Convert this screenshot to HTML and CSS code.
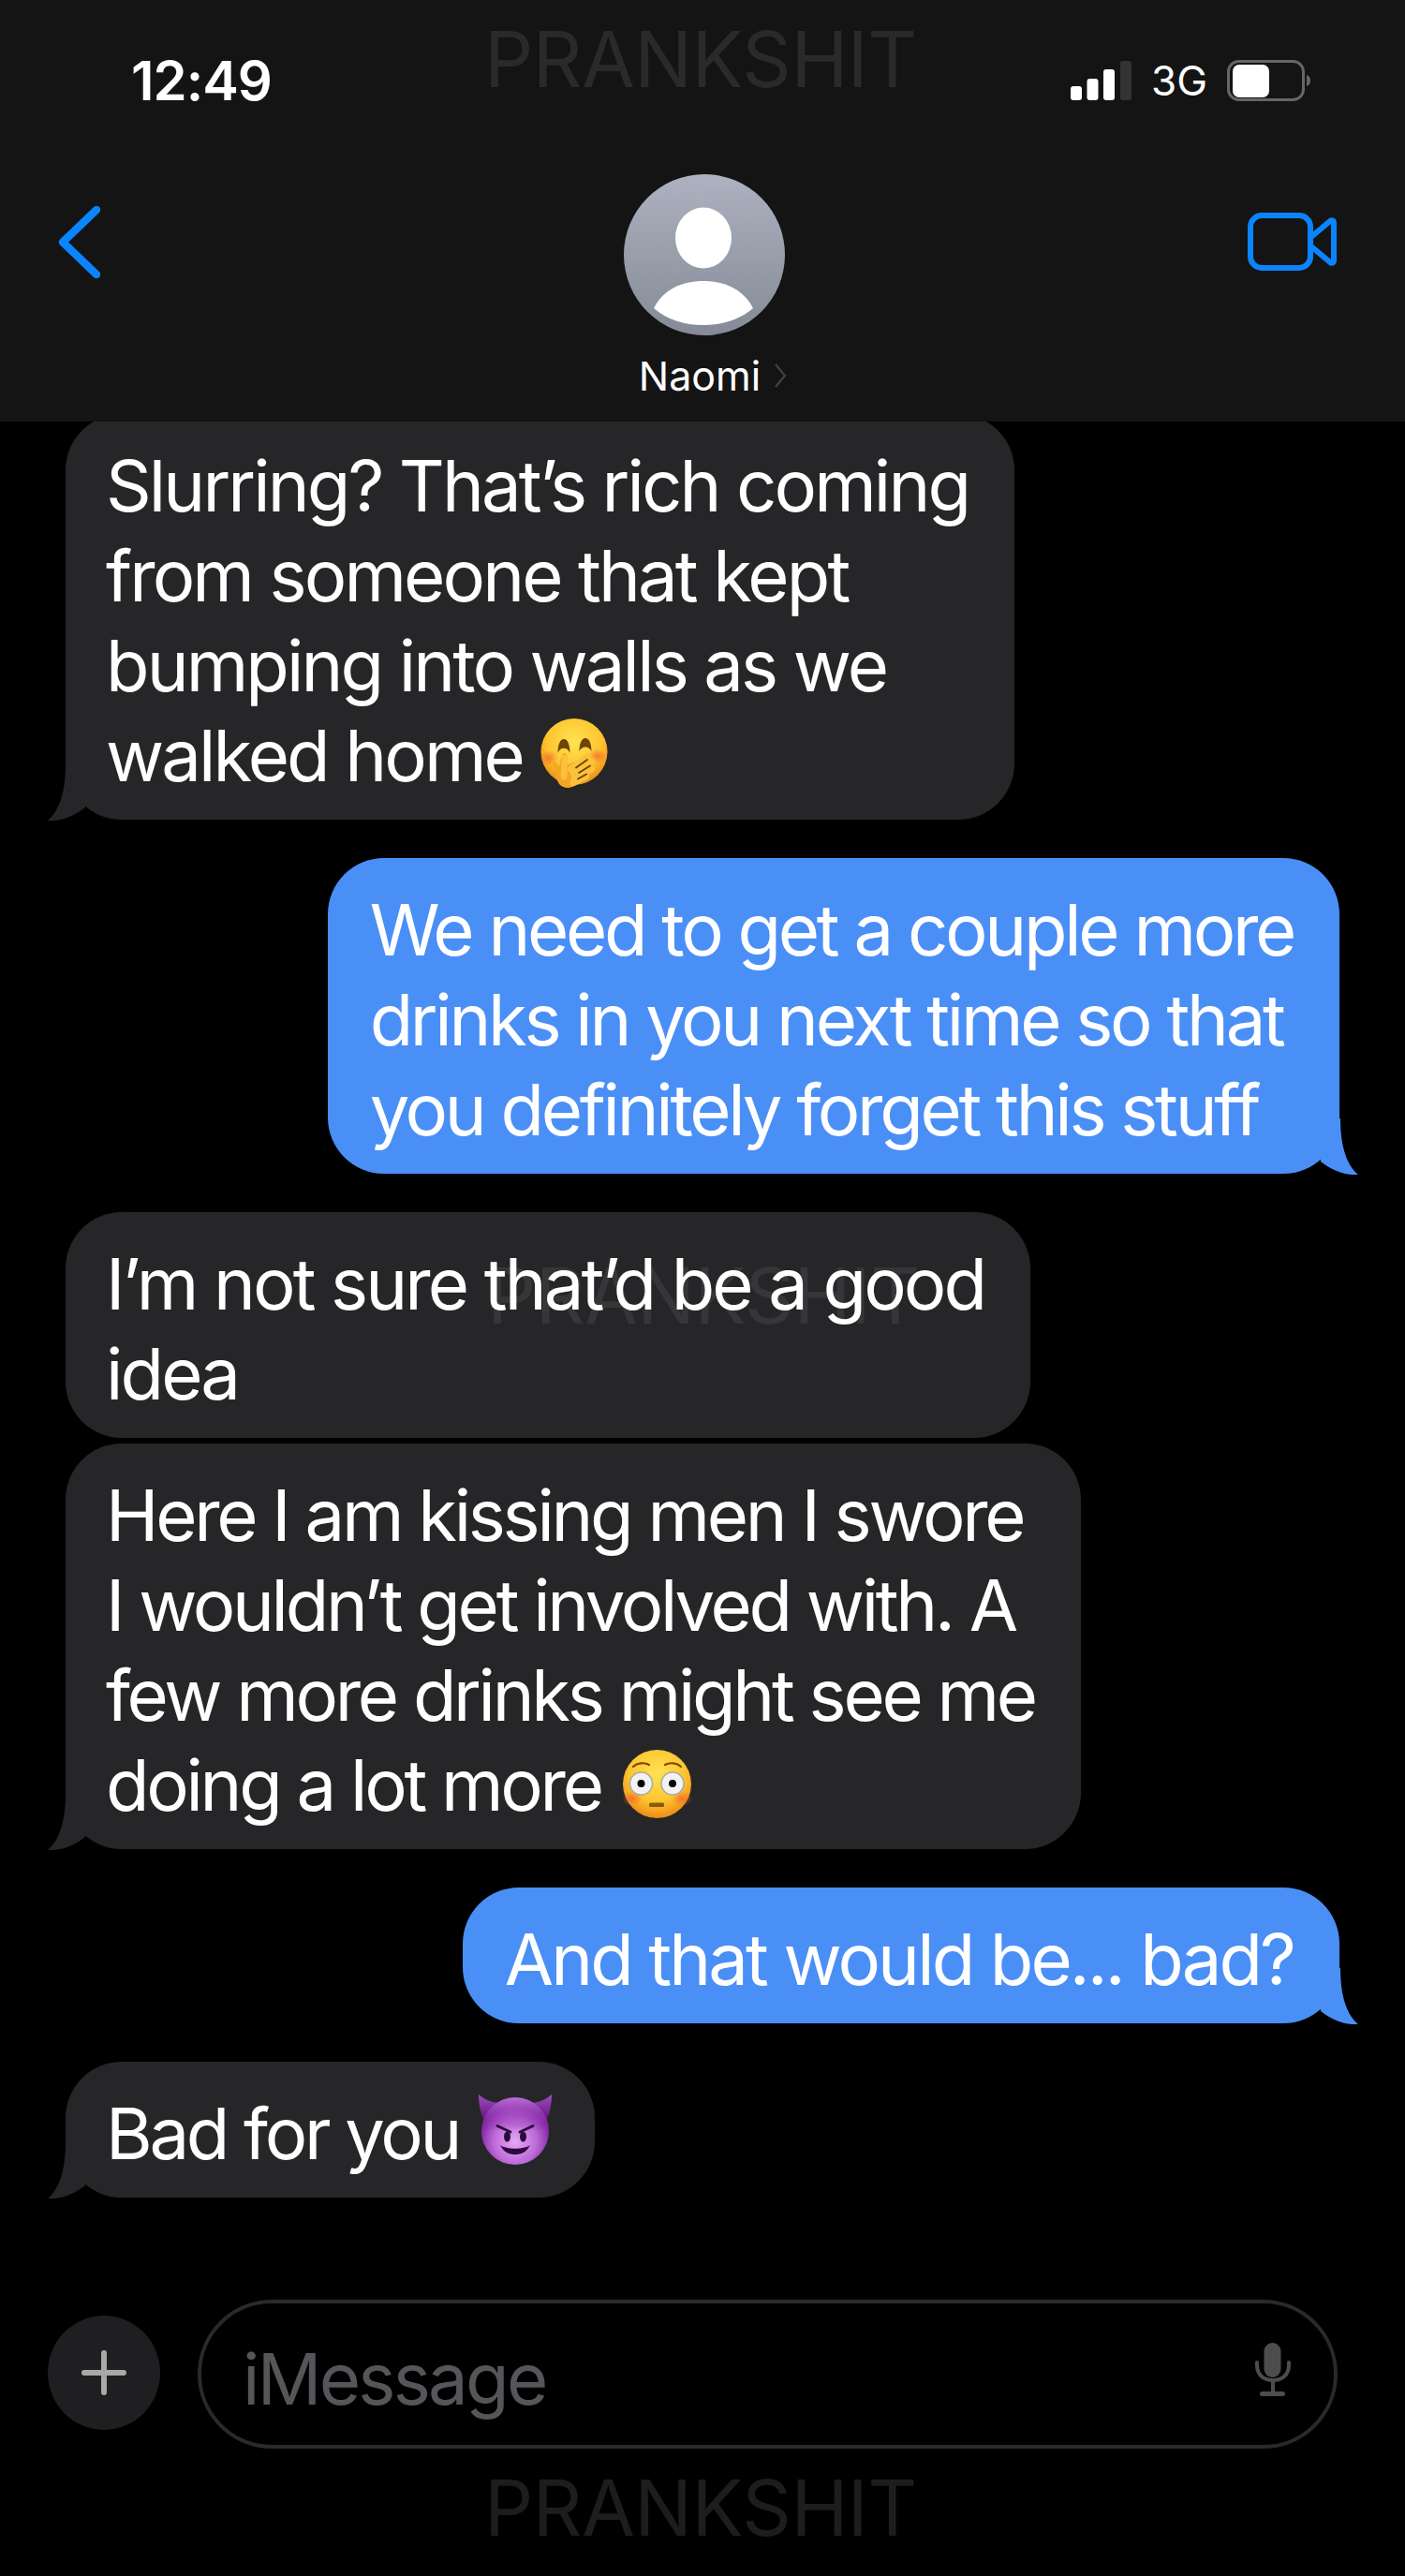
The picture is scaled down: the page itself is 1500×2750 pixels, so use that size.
FILE: index.html
```html
<!DOCTYPE html>
<html>
<head>
<meta charset="UTF-8">
<title>Naomi</title>
<link rel="stylesheet" href="styles.css">
</head>
<body>
<svg class="defs" width="0" height="0">
  <defs>
    <radialGradient id="faceYellow" cx="50%" cy="35%" r="68%">
      <stop offset="0" stop-color="#ffe353"/>
      <stop offset="0.6" stop-color="#fdc52f"/>
      <stop offset="1" stop-color="#ea8414"/>
    </radialGradient>
    <radialGradient id="cheek">
      <stop offset="0" stop-color="#f4632e" stop-opacity="0.75"/>
      <stop offset="1" stop-color="#f4632e" stop-opacity="0"/>
    </radialGradient>
    <radialGradient id="facePurple" cx="50%" cy="66%" r="64%">
      <stop offset="0" stop-color="#e6a8f4"/>
      <stop offset="0.5" stop-color="#bd6bd8"/>
      <stop offset="0.82" stop-color="#8526a6"/>
      <stop offset="1" stop-color="#661a88"/>
    </radialGradient>
    <linearGradient id="faceShine" x1="0" y1="0" x2="0" y2="1">
      <stop offset="0" stop-color="#c77ae0" stop-opacity="0.9"/>
      <stop offset="0.42" stop-color="#8a2aa8" stop-opacity="0.2"/>
      <stop offset="0.5" stop-color="#8a2aa8" stop-opacity="0"/>
    </linearGradient>
    <linearGradient id="horn" x1="0" y1="0" x2="0" y2="1">
      <stop offset="0" stop-color="#a04cc0"/>
      <stop offset="1" stop-color="#62177f"/>
    </linearGradient>
    <linearGradient id="avatarBg" x1="0" y1="0" x2="0" y2="1">
      <stop offset="0" stop-color="#aeb2c0"/>
      <stop offset="1" stop-color="#858a97"/>
    </linearGradient>
  </defs>
</svg>

<header class="top">
  <div class="wm wm-top">PRANKSHIT</div>
  <div class="status">
    <span class="time">12:49</span>
    <div class="status-right">
      <svg class="signal" width="65" height="42" viewBox="0 0 65 42">
        <rect x="0" y="27" width="12" height="15" rx="3" fill="#fff"/>
        <rect x="17.500" y="19" width="12" height="23" rx="3" fill="#fff"/>
        <rect x="35" y="9" width="12" height="33" rx="3" fill="#fff"/>
        <rect x="53" y="0" width="12" height="42" rx="3" fill="#333"/>
      </svg>
      <span class="net">3G</span>
      <svg class="battery" width="89" height="44" viewBox="0 0 89 44">
        <rect x="1.500" y="1.500" width="80" height="41" rx="11" fill="none" stroke="#666" stroke-width="3"/>
        <rect x="6" y="5" width="39" height="35" rx="7" fill="#fff"/>
        <path d="M85 16 C88 17 89 19 89 22 C89 25 88 27 85 28 Z" fill="#666"/>
      </svg>
    </div>
  </div>
  <nav class="nav">
    <svg class="back" width="45" height="77" viewBox="0 0 45 77">
      <path d="M41 4 L5 38.500 L41 73" fill="none" stroke="#0a84ff" stroke-width="8.500" stroke-linecap="round" stroke-linejoin="round"/>
    </svg>
    <div class="contact">
      <svg class="avatar" width="172" height="172" viewBox="0 0 172 172">
        <circle cx="86" cy="86" r="86" fill="url(#avatarBg)"/>
        <ellipse cx="85" cy="68" rx="30" ry="32.500" fill="#fff"/>
        <path d="M32 143 C42 123 62 114 85 114 C108 114 128 123 138 143 C124 155 106 161 85 161 C64 161 46 155 32 143 Z" fill="#fff"/>
      </svg>
      <div class="name">
        <span>Naomi</span>
        <svg width="14" height="28" viewBox="0 0 14 28"><path d="M2 2 L12 14 L2 26" fill="none" stroke="#444" stroke-width="2"/></svg>
      </div>
    </div>
    <svg class="video" width="95" height="62" viewBox="0 0 95 62">
      <rect x="3" y="3" width="64" height="56" rx="12" fill="none" stroke="#0a84ff" stroke-width="6"/>
      <path d="M69 25 L88 9 C90 7.500 92 8.500 92 11 L92 51 C92 53.500 90 54.500 88 53 L69 37" fill="none" stroke="#0a84ff" stroke-width="6" stroke-linejoin="round" stroke-linecap="round"/>
    </svg>
  </nav>
</header>

<section class="messages">
  <div class="row row-first">
    <div class="bubble in">Slurring? That’s rich coming<br>from someone that kept<br>bumping into walls as we<br>walked home <svg class="emoji e-hand" width="75" height="75" viewBox="0 0 75 75">
        <circle cx="37" cy="35.500" r="35.500" fill="url(#faceYellow)"/>
        <ellipse cx="10" cy="42" rx="10" ry="8" fill="url(#cheek)"/>
        <ellipse cx="62" cy="40" rx="10" ry="8" fill="url(#cheek)"/>
        <path d="M19.500 37 C19.500 28 22 22 26 22 C30 22 32.500 28 32.500 37 C30 30 22 30 19.500 37 Z" fill="#6d4508"/>
        <path d="M42.500 35 C42.500 27 45 21 49 21 C53 21 55.500 27 55.500 35 C53 29 45 29 42.500 35 Z" fill="#6d4508"/>
        <path d="M21 70 C16 62 18 55 14 49 C13 47 16 46 18 48 L21 52 C22 47 23 42 24.500 38.500 C26 36 29.500 37 29.500 40 L29 50 L38 46 L47 60 L42 68 C37 74 27 77 21 70 Z" fill="#f5a623"/>
        <g fill="none" stroke="#fbc13b" stroke-width="6.500" stroke-linecap="round">
          <path d="M26 62 L27 42"/>
          <path d="M33 54 L52 40"/>
          <path d="M36 59 L56 46"/>
          <path d="M37 64 L56 54"/>
          <path d="M36 69 L50 62"/>
        </g>
        <g fill="none" stroke="#6b3f0a" stroke-width="1.800" stroke-linecap="round">
          <path d="M39 52.500 L51 44"/>
          <path d="M42 58 L54 50.500"/>
          <path d="M41 64.500 L50 59.500"/>
        </g>
      </svg></div>
    <svg class="tail tail-in" width="60" height="60" viewBox="0 0 60 60"><path d="M19 0 C19 30 12 50 0 60 C16 61 30 54 40 46 L40 0 Z"/></svg>
  </div>
  <div class="row row-out row-gap">
    <div class="bubble out tight">We need to get a couple more<br>drinks in you next time so that<br>you definitely forget this stuff</div>
    <svg class="tail tail-out" width="60" height="60" viewBox="0 0 60 60"><path d="M19 0 C19 30 12 50 0 60 C16 61 30 54 40 46 L40 0 Z"/></svg>
  </div>
  <div class="row row-gap">
    <div class="bubble in">
      <div class="wm wm-mid">PRANKSHIT</div>
      <span class="over">I’m not sure that’d be a good<br>idea</span>
    </div>
  </div>
  <div class="row row-near">
    <div class="bubble in tight">Here I am kissing men I swore<br>I wouldn’t get involved with. A<br>few more drinks might see me<br>doing a lot more <svg class="emoji e-flushed" width="73" height="73" viewBox="0 0 73 73">
        <circle cx="36.500" cy="36.500" r="36.500" fill="url(#faceYellow)"/>
        <ellipse cx="10" cy="52" rx="11" ry="8" fill="url(#cheek)"/>
        <ellipse cx="63" cy="52" rx="11" ry="8" fill="url(#cheek)"/>
        <circle cx="19.500" cy="36" r="12" fill="#f2f2f2" stroke="#a9a9a9" stroke-width="1.500"/>
        <circle cx="53" cy="36" r="12" fill="#f2f2f2" stroke="#a9a9a9" stroke-width="1.500"/>
        <circle cx="19.500" cy="36" r="4" fill="#000"/>
        <circle cx="53" cy="36" r="4" fill="#000"/>
        <path d="M11 18 C15 14 23 13 28 16" fill="none" stroke="#7a4a08" stroke-width="2.200" stroke-linecap="round"/>
        <path d="M45 16 C50 13 58 14 62 18" fill="none" stroke="#7a4a08" stroke-width="2.200" stroke-linecap="round"/>
        <rect x="28" y="56.500" width="16" height="4.500" rx="1.500" fill="#8a5a0c"/>
      </svg></div>
    <svg class="tail tail-in" width="60" height="60" viewBox="0 0 60 60"><path d="M19 0 C19 30 12 50 0 60 C16 61 30 54 40 46 L40 0 Z"/></svg>
  </div>
  <div class="row row-out row-gap">
    <div class="bubble out">And that would be... bad?</div>
    <svg class="tail tail-out" width="60" height="60" viewBox="0 0 60 60"><path d="M19 0 C19 30 12 50 0 60 C16 61 30 54 40 46 L40 0 Z"/></svg>
  </div>
  <div class="row row-gap">
    <div class="bubble in tight">Bad for you <svg class="emoji e-imp" width="78" height="75" viewBox="0 0 78 75">
        <path d="M0 0 C7 6 15 9 24 9 L5 26 C2 19 0 10 0 0 Z" fill="url(#horn)"/>
        <path d="M78 0 C71 6 63 9 54 9 L73 26 C76 19 78 10 78 0 Z" fill="url(#horn)"/>
        <circle cx="39" cy="39" r="36" fill="url(#facePurple)"/>
        <circle cx="39" cy="39" r="36" fill="url(#faceShine)"/>
        <path d="M20 33.500 L34 40" fill="none" stroke="#2c0a40" stroke-width="2.800" stroke-linecap="round"/>
        <path d="M58 33.500 L44 40" fill="none" stroke="#2c0a40" stroke-width="2.800" stroke-linecap="round"/>
        <ellipse cx="30.500" cy="45" rx="3.500" ry="5.500" fill="#2c0a40"/>
        <ellipse cx="47.500" cy="45" rx="3.500" ry="5.500" fill="#2c0a40"/>
        <path d="M23 54 C30 59 48 59 55 54 C51 62 45 64 39 64 C33 64 27 62 23 54 Z" fill="#2c0a40"/>
      </svg></div>
    <svg class="tail tail-in" width="60" height="60" viewBox="0 0 60 60"><path d="M19 0 C19 30 12 50 0 60 C16 61 30 54 40 46 L40 0 Z"/></svg>
  </div>
</section>

<footer class="composer">
  <div class="plus">
    <svg width="48" height="48" viewBox="0 0 48 48">
      <path d="M24 3 L24 45 M3 24 L45 24" stroke="#a8a8a8" stroke-width="6" stroke-linecap="round"/>
    </svg>
  </div>
  <div class="field">
    <span class="placeholder">iMessage</span>
    <svg class="mic" width="38" height="58" viewBox="0 0 38 58">
      <rect x="9.500" y="0" width="18" height="37" rx="9" fill="#4d4d4d"/>
      <path d="M2 21 L2 24 C2 34 9 40 19 40 C29 40 36 34 36 24 L36 21" fill="none" stroke="#4d4d4d" stroke-width="4" stroke-linecap="round"/>
      <path d="M19 40 L19 54" stroke="#4d4d4d" stroke-width="4"/>
      <rect x="5" y="52" width="27" height="5" rx="2.500" fill="#4d4d4d"/>
    </svg>
  </div>
  <div class="wm wm-bottom">PRANKSHIT</div>
</footer>
</body>
</html>
```

FILE: styles.css
```css
* {
  box-sizing: border-box;
}
html, body {
  margin: 0;
  padding: 0;
}
body {
  width: 1500px;
  height: 2750px;
  background: #000;
  color: #fff;
  font-family: Inter, "Liberation Sans", sans-serif;
  display: flex;
  flex-direction: column;
  overflow: hidden;
}
.defs {
  display: block;
  height: 0;
}

/* watermark */
.wm {
  position: absolute;
  font-size: 82px;
  line-height: 82px;
  font-weight: 400;
  letter-spacing: -0.5px;
  white-space: nowrap;
}
.wm-top {
  left: 517px;
  top: 23px;
  color: #2a2a2a;
}
.wm-mid {
  left: 450px;
  top: 49px;
  color: #363638;
}
.wm-bottom {
  left: 517px;
  top: 182px;
  color: #1d1d1d;
}

/* header */
.top {
  position: relative;
  height: 450px;
  flex: none;
  background: #141414;
}
.status {
  height: 172px;
  padding: 0 101px 0 140px;
  display: flex;
  align-items: center;
  justify-content: space-between;
}
.time {
  font-size: 58px;
  font-weight: 600;
  letter-spacing: -1px;
}
.status-right {
  display: flex;
  align-items: center;
  gap: 21px;
}
.net {
  font-size: 44px;
  line-height: 44px;
}
.nav {
  display: grid;
  grid-template-columns: 1fr auto 1fr;
  align-items: start;
  padding: 14px 73px 0 77px;
}
.back {
  margin: 34px 0 0 -15px;
}
.contact {
  display: flex;
  flex-direction: column;
  align-items: center;
}
.avatar {
  display: block;
}
.name {
  display: flex;
  align-items: center;
  gap: 14px;
  margin: 17px 0 0 18px;
  font-size: 43px;
  line-height: 52px;
}
.video {
  justify-self: end;
  margin-top: 41px;
}

/* messages */
.messages {
  flex: 1;
  overflow: hidden;
  padding: 0 70px;
}
.row {
  position: relative;
  display: flex;
}
.row-first {
  margin-top: -8px;
}
.row-gap {
  margin-top: 41px;
}
.row-near {
  margin-top: 6px;
}
.row-out {
  justify-content: flex-end;
}
.bubble {
  position: relative;
  padding: 28px 49px 21px 43px;
  border-radius: 60px;
  font-size: 76px;
  line-height: 96px;
  letter-spacing: -2.900px;
  white-space: nowrap;
}
.tight {
  letter-spacing: -3.300px;
}
.in {
  background: #262628;
}
.out {
  padding-left: 45px;
  background: #4a8ff6;
}
.over {
  position: relative;
}
.emoji {
  letter-spacing: 0;
  vertical-align: -8px;
}
.e-flushed {
  margin-left: 5px;
}
.e-imp {
  margin: 0 -3px 0 3px;
  vertical-align: -6px;
}
.tail {
  position: absolute;
  bottom: -1px;
}
.tail-in {
  left: -19px;
  fill: #262628;
}
.tail-out {
  right: -20px;
  fill: #4a8ff6;
  transform: scaleX(-1);
}

/* composer */
.composer {
  position: relative;
  height: 295px;
  flex: none;
  display: flex;
  align-items: flex-start;
  gap: 40px;
  padding: 0 72px 0 51px;
}
.plus {
  width: 120px;
  height: 122px;
  margin-top: 17px;
  flex: none;
  border-radius: 50%;
  background: #1f1e20;
  display: flex;
  align-items: center;
  justify-content: center;
}
.field {
  flex: 1;
  height: 159px;
  border: 4px solid #2a2a2c;
  border-radius: 80px;
  display: flex;
  align-items: center;
  justify-content: space-between;
  padding: 0 46px 0 44px;
}
.placeholder {
  font-size: 76px;
  line-height: 96px;
  letter-spacing: -2.700px;
  color: #56565a;
  padding-top: 8px;
}
.mic {
  margin-bottom: 10px;
}
```
